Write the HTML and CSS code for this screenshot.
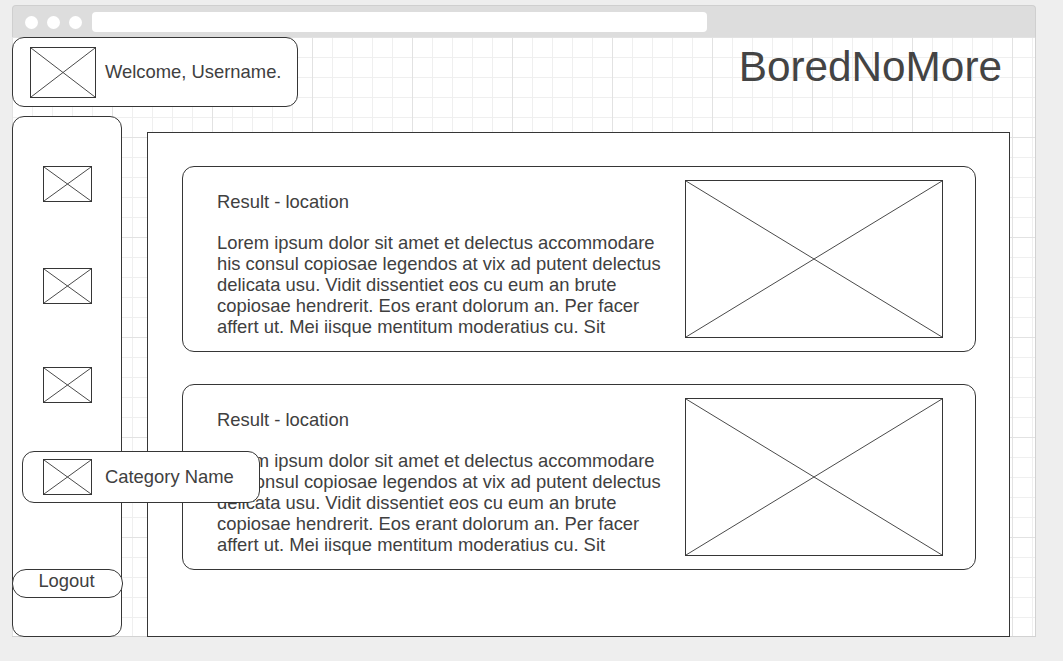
FILE: index.html
```html
<!DOCTYPE html>
<html lang="en">
<head>
<meta charset="utf-8">
<title>BoredNoMore</title>
<link rel="stylesheet" href="styles.css">
</head>
<body>
<div class="window">
  <div class="titlebar">
    <span class="dot"></span><span class="dot"></span><span class="dot"></span>
    <span class="address"></span>
  </div>
  <div class="canvas">
    <header class="header">
      <div class="welcome">
        <svg class="ph ph-welcome" viewBox="0 0 100 100" preserveAspectRatio="none"><path d="M0 0L100 100M100 0L0 100"/></svg>
        <span class="welcome-text">Welcome, Username.</span>
      </div>
      <h1 class="brand">BoredNoMore</h1>
    </header>

    <nav class="sidebar">
      <svg class="ph ph-nav nav-first" viewBox="0 0 100 100" preserveAspectRatio="none"><path d="M0 0L100 100M100 0L0 100"/></svg>
      <svg class="ph ph-nav nav-second" viewBox="0 0 100 100" preserveAspectRatio="none"><path d="M0 0L100 100M100 0L0 100"/></svg>
      <svg class="ph ph-nav nav-third" viewBox="0 0 100 100" preserveAspectRatio="none"><path d="M0 0L100 100M100 0L0 100"/></svg>
      <button class="logout">Logout</button>
    </nav>

    <main class="results">
      <article class="card">
        <div class="card-text">
          <p class="card-title">Result - location</p>
          <p class="card-body">Lorem ipsum dolor sit amet et delectus accommodare his consul copiosae legendos at vix ad putent delectus delicata usu. Vidit dissentiet eos cu eum an brute copiosae hendrerit. Eos erant dolorum an. Per facer affert ut. Mei iisque mentitum moderatius cu. Sit</p>
        </div>
        <svg class="ph ph-card" viewBox="0 0 100 100" preserveAspectRatio="none"><path d="M0 0L100 100M100 0L0 100"/></svg>
      </article>
      <article class="card">
        <div class="card-text">
          <p class="card-title">Result - location</p>
          <p class="card-body">Lorem ipsum dolor sit amet et delectus accommodare his consul copiosae legendos at vix ad putent delectus delicata usu. Vidit dissentiet eos cu eum an brute copiosae hendrerit. Eos erant dolorum an. Per facer affert ut. Mei iisque mentitum moderatius cu. Sit</p>
        </div>
        <svg class="ph ph-card" viewBox="0 0 100 100" preserveAspectRatio="none"><path d="M0 0L100 100M100 0L0 100"/></svg>
      </article>
    </main>

    <div class="category">
      <svg class="ph ph-nav" viewBox="0 0 100 100" preserveAspectRatio="none"><path d="M0 0L100 100M100 0L0 100"/></svg>
      <span class="category-text">Category Name</span>
    </div>
  </div>
</div>
</body>
</html>
```

FILE: styles.css
```css
html, body {
  margin: 0;
  padding: 0;
}

body {
  background: #eeeeee;
  font-family: "Liberation Sans", Arial, sans-serif;
  color: #404040;
  width: 1063px;
  height: 661px;
  overflow: hidden;
}

.window {
  margin: 5px 0 0 12px;
  width: 1024px;
  display: flex;
  flex-direction: column;
}

.titlebar {
  box-sizing: border-box;
  height: 32px;
  background: #dddddd;
  border: 1px solid #cfcfcf;
  border-bottom: none;
  border-radius: 4px 4px 0 0;
  display: flex;
  align-items: center;
  padding-left: 12px;
  gap: 9px;
}

.dot {
  width: 13px;
  height: 13px;
  border-radius: 50%;
  background: #ffffff;
  margin-top: 2px;
}

.address {
  margin-left: 1px;
  width: 615px;
  height: 20px;
  background: #ffffff;
  border-radius: 4px;
}

.canvas {
  position: relative;
  box-sizing: border-box;
  height: 600px;
  background-color: #ffffff;
  background-image:
    linear-gradient(to right, #e2e2e2 1px, transparent 1px),
    linear-gradient(to bottom, #e2e2e2 1px, transparent 1px),
    linear-gradient(to right, #efefef 1px, transparent 1px),
    linear-gradient(to bottom, #efefef 1px, transparent 1px);
  background-size: 100px 100px, 100px 100px, 20px 20px, 20px 20px;
  box-shadow: inset -1px 0 0 #d2d2d2, inset 0 -1px 0 #d2d2d2;
  display: grid;
  grid-template-columns: 110px 863px;
  grid-template-rows: 70px 530px;
  column-gap: 25px;
}

.header {
  grid-column: 1 / -1;
  display: flex;
  justify-content: space-between;
  align-items: flex-start;
}

.welcome {
  box-sizing: border-box;
  width: 286px;
  height: 70px;
  border: 1px solid #363636;
  border-radius: 12px;
  background: #ffffff;
  display: flex;
  align-items: center;
  padding-left: 17px;
  padding-bottom: 1px;
  gap: 9px;
}

.welcome-text,
.category-text {
  font-size: 18.4px;
  line-height: 21px;
  white-space: nowrap;
}

.brand {
  margin: 6px 8px 0 0;
  font-size: 42.3px;
  line-height: 48px;
  font-weight: normal;
  color: #444444;
}

.ph {
  display: block;
  box-sizing: border-box;
  border: 1px solid #363636;
  background: #ffffff;
  flex: none;
}

.ph path {
  stroke: #4a4a4a;
  stroke-width: 1;
  fill: none;
  vector-effect: non-scaling-stroke;
}

.ph-welcome {
  width: 66px;
  height: 51px;
  margin-top: 1px;
}

.ph-nav {
  width: 49px;
  height: 36px;
}

.ph-card {
  width: 258px;
  height: 158px;
  margin-left: auto;
}

.sidebar {
  grid-column: 1;
  grid-row: 2;
  box-sizing: border-box;
  margin-top: 9px;
  height: 521px;
  border: 1px solid #363636;
  border-radius: 12px;
  background: #ffffff;
  display: flex;
  flex-direction: column;
  align-items: center;
  padding-top: 49px;
}

.nav-second {
  margin-top: 66px;
}

.nav-third {
  margin-top: 63px;
}

.logout {
  align-self: flex-start;
  margin: auto 0 38px -1px;
  box-sizing: border-box;
  width: 111px;
  height: 29px;
  padding: 0 2px 0 0;
  border: 1px solid #363636;
  border-radius: 14px;
  background: #ffffff;
  font-family: "Liberation Sans", Arial, sans-serif;
  font-size: 18.4px;
  line-height: 21px;
  color: #404040;
  display: flex;
  justify-content: center;
  align-items: flex-start;
  cursor: pointer;
}

.results {
  grid-column: 2;
  grid-row: 2;
  box-sizing: border-box;
  margin-top: 25px;
  height: 505px;
  border: 1px solid #363636;
  background: #ffffff;
  padding: 33px 33px 0 34px;
  display: flex;
  flex-direction: column;
  gap: 32px;
}

.card {
  box-sizing: border-box;
  height: 186px;
  border: 1px solid #363636;
  border-radius: 12px;
  background: #ffffff;
  padding: 13px 32px 13px 34px;
  display: flex;
  align-items: flex-start;
}

.card-text {
  width: 452px;
  margin-top: 10.5px;
  font-size: 18.4px;
  line-height: 21px;
}

.card-title,
.card-body {
  margin: 0;
}

.card-body {
  margin-top: 20px;
}

.category {
  position: absolute;
  left: 10px;
  top: 414px;
  box-sizing: border-box;
  width: 238px;
  height: 52px;
  border: 1px solid #363636;
  border-radius: 12px;
  background: #ffffff;
  display: flex;
  align-items: center;
  padding-left: 20px;
  gap: 13px;
}

.category-text {
  margin-top: -1px;
}
```
